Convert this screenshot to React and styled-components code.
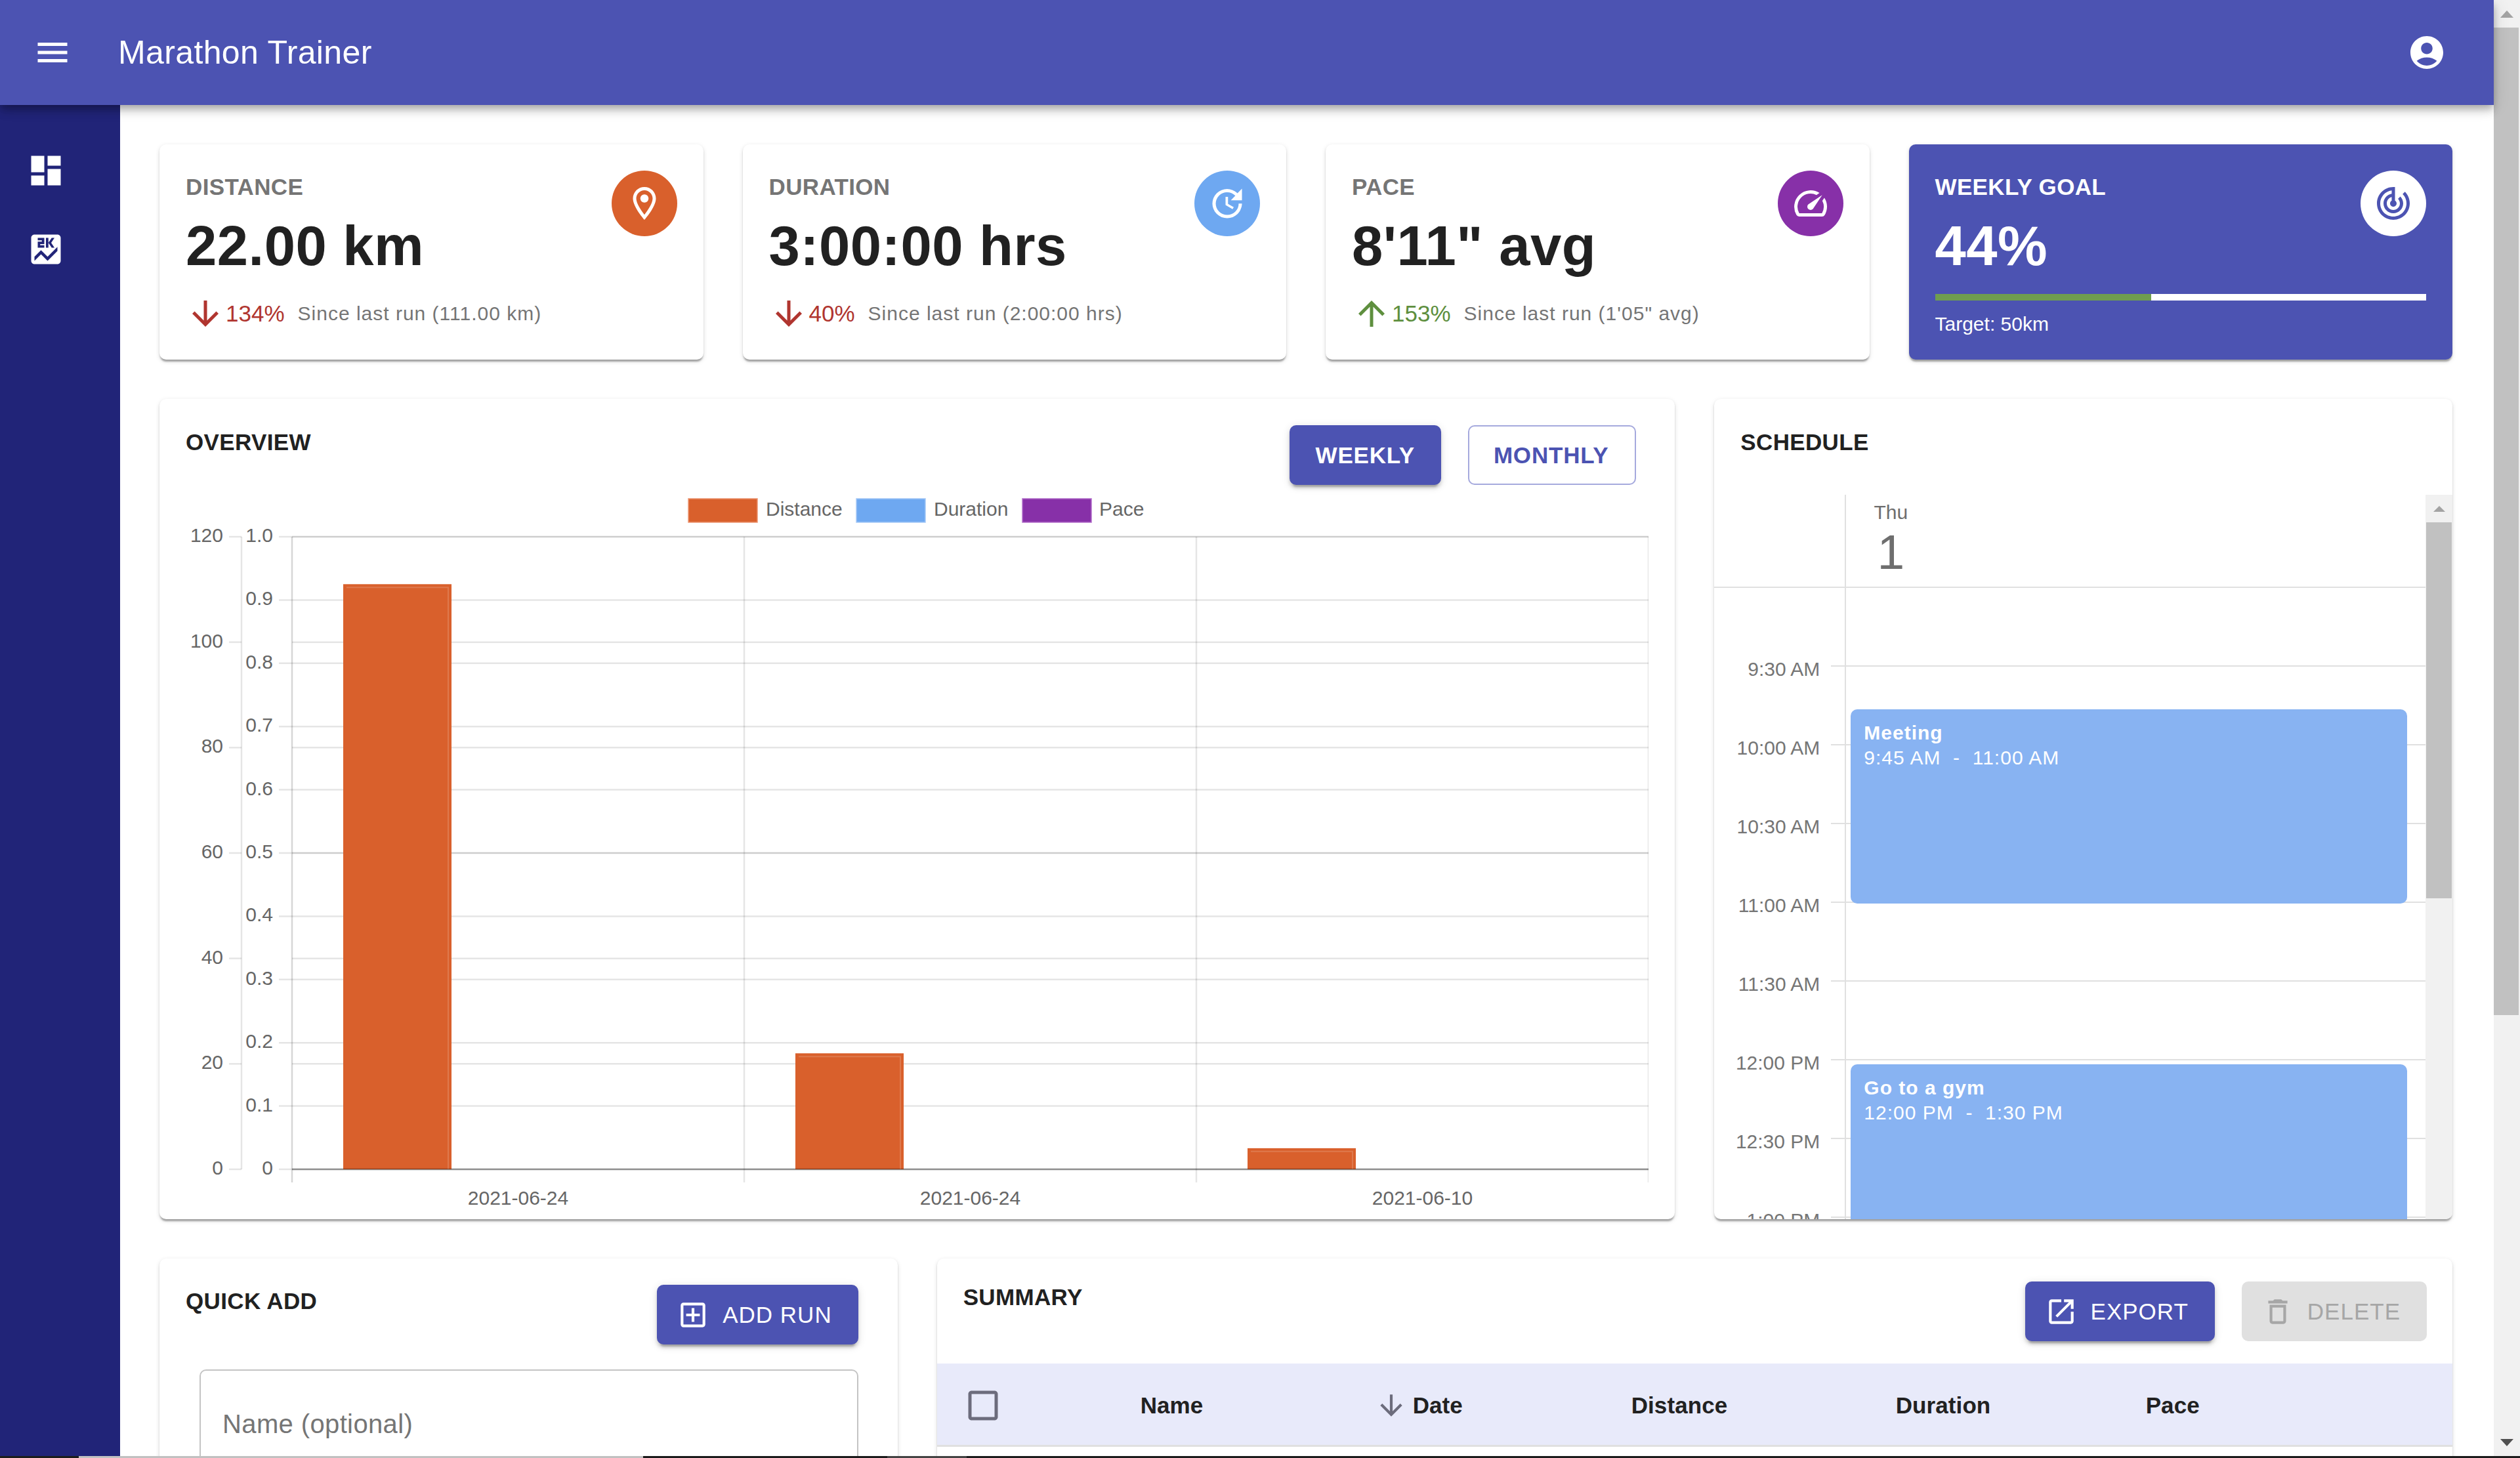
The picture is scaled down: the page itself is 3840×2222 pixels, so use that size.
import React from 'react'
import styled, { createGlobalStyle } from 'styled-components'
import {
  MdMenu, MdDashboard, MdScore, MdAccountCircle, MdOutlineRoom, MdUpdate, MdSpeed, MdTrackChanges,
  MdArrowDownward, MdArrowUpward, MdOutlineAddBox, MdOpenInNew, MdDeleteOutline, MdCheckBoxOutlineBlank,
} from 'react-icons/md'

const INDIGO = '#4c53b2'
const ORANGE = '#d9602c'
const BLUE = '#6ea8f1'
const PURPLE = '#8730a8'
const GREY = '#757575'
const INK = '#212121'
const RED = '#b0352f'
const GREEN = '#5e8f3e'

const Global = createGlobalStyle`
  * { box-sizing: border-box; }
  html, body { margin: 0; padding: 0; background: #fff; overflow: hidden; }
  body { font-family: "Liberation Sans", Arial, sans-serif; color: ${INK}; }
`

const Page = styled.div`
  width: 3840px;
  height: 2222px;
  display: flex;
  flex-direction: column;
  overflow: hidden;
`
const Viewport = styled.div`
  flex: 1;
  min-height: 0;
  display: flex;
`
const Content = styled.div`
  flex: 1;
  min-width: 0;
  display: flex;
  flex-direction: column;
`
const TopBar = styled.header`
  height: 160px;
  flex: none;
  display: flex;
  align-items: center;
  padding: 0 72px 0 50px;
  background: ${INDIGO};
  color: #fff;
  position: relative;
  z-index: 2;
  box-shadow: 0 5px 10px -2.5px rgba(0,0,0,.2), 0 10px 12.5px 0 rgba(0,0,0,.14), 0 2.5px 25px 0 rgba(0,0,0,.12);
`
const AppTitle = styled.h1`
  margin: 0 auto 0 70px;
  font-size: 50px;
  font-weight: 400;
  letter-spacing: .375px;
  line-height: 60px;
`
const Body = styled.div`
  flex: 1;
  min-height: 0;
  display: flex;
`
const Sidebar = styled.nav`
  width: 183px;
  flex: none;
  background: #212478;
  color: #fff;
  padding-top: 70px;
  display: flex;
  flex-direction: column;
  align-items: flex-start;
  gap: 60px;
  padding-left: 40px;
`
const Main = styled.main`
  flex: 1;
  min-width: 0;
  padding: 60px 63px 0 60px;
  overflow: hidden;
`
const Grid = styled.div`
  display: grid;
  grid-template-columns: repeat(12, 1fr);
  column-gap: 60px;
  row-gap: 60px;
  grid-template-rows: 328px 1250px 600px;
`
const Card = styled.section`
  grid-column: span ${p => p.$span};
  min-width: 0;
  position: relative;
  border-radius: 10px;
  background: ${p => p.$accent ? INDIGO : '#fff'};
  color: ${p => p.$accent ? '#fff' : INK};
  box-shadow: 0 5px 2.5px -2.5px rgba(0,0,0,.2), 0 2.5px 2.5px 0 rgba(0,0,0,.14), 0 2.5px 7.5px 0 rgba(0,0,0,.12);
  overflow: hidden;
`
const StatCard = styled(Card)`
  padding: 40px;
`
const StatTop = styled.div`
  display: flex;
  justify-content: space-between;
  align-items: flex-start;
`
const StatLabel = styled.div`
  font-size: 35px;
  font-weight: 700;
  letter-spacing: .35px;
  line-height: 50px;
  color: ${p => p.$accent ? '#fff' : GREY};
`
const StatValue = styled.div`
  font-size: 85px;
  font-weight: 700;
  letter-spacing: .5px;
  line-height: 100px;
  margin-top: 15px;
  color: ${p => p.$accent ? '#fff' : INK};
`
const Badge = styled.div`
  width: 100px;
  height: 100px;
  flex: none;
  border-radius: 50%;
  background: ${p => p.$bg};
  color: ${p => p.$fg || '#fff'};
  display: flex;
  align-items: center;
  justify-content: center;
`
const StatFooter = styled.div`
  display: flex;
  align-items: center;
  height: 60px;
  margin-top: 23px;
`
const Change = styled.span`
  font-size: 35px;
  margin-left: 1px;
  color: ${p => p.$up ? GREEN : RED};
`
const ChangeNote = styled.span`
  font-size: 30px;
  letter-spacing: 1px;
  margin-left: 20px;
  color: ${GREY};
`
const GoalBar = styled.div`
  height: 10px;
  margin-top: 23px;
  background: #fff;
`
const GoalFill = styled.div`
  height: 100%;
  background: #6f9d4f;
`
const GoalTarget = styled.div`
  font-size: 30px;
  line-height: 40px;
  margin-top: 16px;
`
const PanelHead = styled.div`
  display: flex;
  justify-content: space-between;
  align-items: flex-start;
  padding: ${p => p.$pad};
`
const PanelTitle = styled.h2`
  margin: 0;
  font-size: 35px;
  font-weight: 700;
  letter-spacing: .35px;
  line-height: ${p => p.$lh || 52}px;
  color: ${INK};
`
const ButtonRow = styled.div`
  display: flex;
  gap: 41px;
`
const Button = styled.button`
  height: 91px;
  display: inline-flex;
  align-items: center;
  border-radius: 10px;
  border: ${p => p.$outlined ? '2.5px solid #a5a9dd' : 'none'};
  background: ${p => p.$disabled ? '#e0e0e0' : p.$outlined ? '#fff' : INDIGO};
  color: ${p => p.$disabled ? '#a6a6a6' : p.$outlined ? INDIGO : '#fff'};
  padding: ${p => p.$icon ? '0 40px 0 30px' : p.$outlined ? '0 40px 0 37px' : '0 40px'};
  font-family: inherit;
  font-size: 35px;
  font-weight: ${p => p.$bold ? 700 : 400};
  letter-spacing: ${p => p.$bold ? '.8px' : '1px'};
  box-shadow: ${p => p.$outlined || p.$disabled ? 'none' : '0 7.5px 2.5px -5px rgba(0,0,0,.2), 0 5px 5px 0 rgba(0,0,0,.14), 0 2.5px 12.5px 0 rgba(0,0,0,.12)'};
  svg { margin-right: 20px; }
`
const ChartBox = styled.div`
  padding: 0 40px;
  svg { display: block; }
`
const ChartLabel = styled.text`
  font-family: "Liberation Sans", Arial, sans-serif;
  font-size: 30px;
  fill: #666;
  dominant-baseline: middle;
`

/* scheduler */
const Scheduler = styled.div`
  position: absolute;
  left: 0;
  right: 0;
  top: 146px;
  bottom: 0;
  display: flex;
`
const SchedulePane = styled.div`
  flex: 1;
  min-width: 0;
  overflow: hidden;
`
const DayHeader = styled.div`
  height: 142px;
  display: flex;
  border-bottom: 2.5px solid #e0e0e0;
`
const DayGutter = styled.div`
  width: 201px;
  flex: none;
  border-right: 2.5px solid #e0e0e0;
`
const DayCell = styled.div`
  padding-top: 9px;
  width: 136px;
  color: #6e6e6e;
  display: flex;
  flex-direction: column;
  align-items: center;
`
const DayName = styled.div`
  font-size: 30px;
  line-height: 36px;
`
const DayNum = styled.div`
  font-size: 75px;
  line-height: 84px;
`
const TimeGrid = styled.div`
  position: relative;
`
const TimeRow = styled.div`
  height: 120px;
  display: flex;
`
const TimeCell = styled.div`
  width: 201px;
  flex: none;
  position: relative;
  text-align: right;
  padding-right: 38px;
  border-right: 2.5px solid #e0e0e0;
  &::after {
    content: "";
    position: absolute;
    right: 0;
    bottom: 0;
    width: 21px;
    border-bottom: 2.5px solid #e0e0e0;
  }
`
const TimeLabel = styled.div`
  font-size: 30px;
  line-height: 36px;
  margin-top: -14px;
  color: ${GREY};
`
const SlotCell = styled.div`
  flex: 1;
  border-bottom: 2.5px solid #e0e0e0;
`
const Appointment = styled.div`
  position: absolute;
  left: 208px;
  width: 848px;
  top: ${p => p.$top}px;
  height: ${p => p.$h}px;
  border-radius: 10px;
  background: #88b3f2;
  color: #fff;
  padding: 17px 20px 0;
  font-size: 30px;
  letter-spacing: 1px;
  line-height: 38px;
  white-space: pre;
`
const AppointmentTitle = styled.div`
  font-weight: 700;
`
const ScrollTrack = styled.div`
  flex: none;
  width: ${p => p.$w}px;
  background: #f1f1f1;
  display: flex;
  flex-direction: column;
`
const ScrollButton = styled.div`
  height: ${p => p.$h}px;
  flex: none;
  display: flex;
  align-items: center;
  justify-content: center;
`
const Triangle = styled.div`
  width: 0;
  height: 0;
  border-left: ${p => p.$size}px solid transparent;
  border-right: ${p => p.$size}px solid transparent;
  border-${p => p.$down ? 'top' : 'bottom'}: ${p => p.$size * 1.1}px solid ${p => p.$color};
`
const ScrollThumb = styled.div`
  height: ${p => p.$h}px;
  flex: none;
  background: #c1c1c1;
  margin: ${p => p.$margin};
`
const ScrollGap = styled.div`
  flex: 1;
`

/* quick add + table */
const NameField = styled.div`
  margin: 38px 60px 0 61px;
  height: 160px;
  border: 2.5px solid #c4c4c4;
  border-radius: 10px;
  padding: 56px 0 0 33px;
  font-size: 40px;
  letter-spacing: .375px;
  line-height: 50px;
  color: ${GREY};
`
const TableHead = styled.div`
  position: absolute;
  left: 0;
  right: 0;
  top: 160px;
  height: 127px;
  padding-top: 4px;
  background: #e8eafa;
  border-bottom: 3px solid #e0e0e0;
  display: grid;
  grid-template-columns: 310px 357px 391px 403px 381px 1fr;
  align-items: center;
  font-size: 35px;
  font-weight: 700;
  letter-spacing: .1px;
  color: ${INK};
`
const CheckCell = styled.div`
  padding-left: 40px;
  display: flex;
  color: #6c6c7c;
`
const DateCell = styled.div`
  display: flex;
  align-items: center;
  gap: 8px;
  svg { color: #6c6c7c; }
`
const BottomStrip = styled.div`
  height: 3px;
  flex: none;
  display: flex;
  background: #1c1c1c;
`
const StripPart = styled.div`
  width: ${p => p.$w}px;
  background: ${p => p.$c};
`

const stats = [
  { label: 'DISTANCE', value: '22.00 km', icon: <MdOutlineRoom size={60} />, bg: ORANGE, change: '134%', note: 'Since last run (111.00 km)' },
  { label: 'DURATION', value: '3:00:00 hrs', icon: <MdUpdate size={60} />, bg: BLUE, change: '40%', note: 'Since last run (2:00:00 hrs)' },
  { label: 'PACE', value: `8'11" avg`, icon: <MdSpeed size={60} />, bg: PURPLE, change: '153%', up: true, note: `Since last run (1'05" avg)` },
]

const times = ['', '9:30 AM', '10:00 AM', '10:30 AM', '11:00 AM', '11:30 AM', '12:00 PM', '12:30 PM', '1:00 PM']

// chart geometry, svg origin sits at page x=283 y=740
const OX = 283
const OY = 740
const TOP = 819 - OY
const BASE = 1783 - OY
const PLOT_L = 445 - OX
const PLOT_R = 2512 - OX
const GROUP = (PLOT_R - PLOT_L) / 3
const AXIS_A = 368 - OX
const yFor = (v, max) => BASE - (BASE - TOP) * v / max

const barList = [111, 22, 4]
const legend = [
  { x: 1049, tx: 1167, c: ORANGE, edge: '#eb9572', text: 'Distance' },
  { x: 1305, tx: 1423, c: BLUE, edge: '#a5c8f6', text: 'Duration' },
  { x: 1558, tx: 1675, c: PURPLE, edge: '#b26dca', text: 'Pace' },
]

const OverviewChart = () => {
  const leftTicks = [0, 20, 40, 60, 80, 100, 120]
  const rightTicks = [0, .1, .2, .3, .4, .5, .6, .7, .8, .9, 1]
  const grid = 'rgba(0,0,0,.1)'
  return (
    <svg width="2229" height="1117" viewBox="0 0 2229 1117">
      {legend.map(l => (
        <g key={l.text}>
          <rect x={l.x - OX} y={761 - OY} width="105" height="36" fill={l.c} stroke={l.edge} strokeWidth="1.5" />
          <ChartLabel x={l.tx - OX} y={779 - OY}>{l.text}</ChartLabel>
        </g>
      ))}
      {leftTicks.map(v => (
        <g key={v}>
          <line x1={349 - OX} x2={AXIS_A} y1={yFor(v, 120)} y2={yFor(v, 120)} stroke={grid} strokeWidth="2.5" />
          <line x1={PLOT_L} x2={PLOT_R} y1={yFor(v, 120)} y2={yFor(v, 120)} stroke={grid} strokeWidth="2.5" />
          <ChartLabel x={340 - OX} y={yFor(v, 120)} textAnchor="end">{v}</ChartLabel>
        </g>
      ))}
      {rightTicks.map(v => (
        <g key={v}>
          <line x1={425 - OX} x2={PLOT_R} y1={yFor(v, 1)} y2={yFor(v, 1)} stroke={grid} strokeWidth="2.5" />
          <ChartLabel x={416 - OX} y={yFor(v, 1)} textAnchor="end">{v === 0 ? '0' : v.toFixed(1)}</ChartLabel>
        </g>
      ))}
      <line x1={AXIS_A} x2={AXIS_A} y1={TOP} y2={BASE} stroke={grid} strokeWidth="2.5" />
      {[0, 1, 2, 3].map(i => (
        <line key={i} x1={PLOT_L + GROUP * i} x2={PLOT_L + GROUP * i} y1={TOP} y2={1803 - OY} stroke={i === 0 ? 'rgba(0,0,0,.16)' : grid} strokeWidth="2.5" />
      ))}
      {barList.map((v, i) => {
        const x = PLOT_L + GROUP * i + 78
        const y = yFor(v, 120)
        return (
          <g key={i}>
            <rect x={x} y={y} width="165" height={BASE - y} fill={ORANGE} />
            <path d={`M${x + 5} ${y + 5}H${x + 160}V${BASE}`} fill="none" stroke="rgba(255,255,255,.16)" strokeWidth="2" />
          </g>
        )
      })}
      <line x1={PLOT_L} x2={PLOT_R} y1={BASE} y2={BASE} stroke="rgba(0,0,0,.3)" strokeWidth="2.5" />
      {['2021-06-24', '2021-06-24', '2021-06-10'].map((d, i) => (
        <ChartLabel key={i} x={PLOT_L + GROUP * i + GROUP / 2} y={1829 - OY} textAnchor="middle">{d}</ChartLabel>
      ))}
    </svg>
  )
}

const Schedule = () => (
  <Scheduler>
    <SchedulePane>
      <DayHeader>
        <DayGutter />
        <DayCell>
          <DayName>Thu</DayName>
          <DayNum>1</DayNum>
        </DayCell>
      </DayHeader>
      <TimeGrid>
        {times.map((t, i) => (
          <TimeRow key={i}>
            <TimeCell><TimeLabel>{t}</TimeLabel></TimeCell>
            <SlotCell />
          </TimeRow>
        ))}
        <Appointment $top={185} $h={296}>
          <AppointmentTitle>Meeting</AppointmentTitle>
          {'9:45 AM  -  11:00 AM'}
        </Appointment>
        <Appointment $top={726} $h={360}>
          <AppointmentTitle>Go to a gym</AppointmentTitle>
          {'12:00 PM  -  1:30 PM'}
        </Appointment>
      </TimeGrid>
    </SchedulePane>
    <ScrollTrack $w={41}>
      <ScrollButton $h={42}><Triangle $size={9} $color="#a3a3a3" /></ScrollButton>
      <ScrollThumb $h={573} $margin="0 1px" />
    </ScrollTrack>
  </Scheduler>
)

const App = () => (
  <Page>
    <Global />
    <Viewport>
      <Content>
        <TopBar>
          <MdMenu size={60} />
          <AppTitle>Marathon Trainer</AppTitle>
          <MdAccountCircle size={60} />
        </TopBar>
        <Body>
          <Sidebar>
            <MdDashboard size={60} />
            <MdScore size={60} />
          </Sidebar>
          <Main>
            <Grid>
              {stats.map(s => (
                <StatCard $span={3} key={s.label}>
                  <StatTop>
                    <div>
                      <StatLabel>{s.label}</StatLabel>
                      <StatValue>{s.value}</StatValue>
                    </div>
                    <Badge $bg={s.bg}>{s.icon}</Badge>
                  </StatTop>
                  <StatFooter>
                    {s.up ? <MdArrowUpward size={60} color={GREEN} /> : <MdArrowDownward size={60} color={RED} />}
                    <Change $up={s.up}>{s.change}</Change>
                    <ChangeNote>{s.note}</ChangeNote>
                  </StatFooter>
                </StatCard>
              ))}
              <StatCard $span={3} $accent>
                <StatTop>
                  <div>
                    <StatLabel $accent>WEEKLY GOAL</StatLabel>
                    <StatValue $accent>44%</StatValue>
                  </div>
                  <Badge $bg="#fff" $fg={INDIGO}><MdTrackChanges size={60} /></Badge>
                </StatTop>
                <GoalBar><GoalFill style={{ width: '44%' }} /></GoalBar>
                <GoalTarget>Target: 50km</GoalTarget>
              </StatCard>

              <Card $span={8}>
                <PanelHead $pad="40px 59px 0 40px">
                  <PanelTitle>OVERVIEW</PanelTitle>
                  <ButtonRow>
                    <Button $bold>WEEKLY</Button>
                    <Button $bold $outlined>MONTHLY</Button>
                  </ButtonRow>
                </PanelHead>
                <ChartBox><OverviewChart /></ChartBox>
              </Card>
              <Card $span={4}>
                <PanelHead $pad="40px 40px 0">
                  <PanelTitle>SCHEDULE</PanelTitle>
                </PanelHead>
                <Schedule />
              </Card>

              <Card $span={4}>
                <PanelHead $pad="40px 60px 0 40px">
                  <PanelTitle $lh={50}>QUICK ADD</PanelTitle>
                  <Button $icon><MdOutlineAddBox size={50} />ADD RUN</Button>
                </PanelHead>
                <NameField>Name (optional)</NameField>
              </Card>
              <Card $span={8}>
                <PanelHead $pad="35px 39px 0 40px">
                  <PanelTitle $lh={48}>SUMMARY</PanelTitle>
                  <ButtonRow>
                    <Button $icon><MdOpenInNew size={50} />EXPORT</Button>
                    <Button $icon $disabled><MdDeleteOutline size={50} />DELETE</Button>
                  </ButtonRow>
                </PanelHead>
                <TableHead>
                  <CheckCell><MdCheckBoxOutlineBlank size={60} /></CheckCell>
                  <div>Name</div>
                  <DateCell><MdArrowDownward size={50} />Date</DateCell>
                  <div>Distance</div>
                  <div>Duration</div>
                  <div>Pace</div>
                </TableHead>
              </Card>
            </Grid>
          </Main>
        </Body>
      </Content>
      <ScrollTrack $w={40}>
        <ScrollButton $h={42}><Triangle $size={10} $color="#a3a3a3" /></ScrollButton>
        <ScrollThumb $h={1505} $margin="0 2px 0 0" />
        <ScrollGap />
        <ScrollButton $h={42}><Triangle $size={10} $down $color="#505050" /></ScrollButton>
      </ScrollTrack>
    </Viewport>
    <BottomStrip>
      <StripPart $w={120} $c="#1c1c1c" />
      <StripPart $w={860} $c="#c1c1c1" />
      <StripPart $w={372} $c="#1c1c1c" />
      <StripPart $w={121} $c="#444" />
    </BottomStrip>
  </Page>
)

export default App
